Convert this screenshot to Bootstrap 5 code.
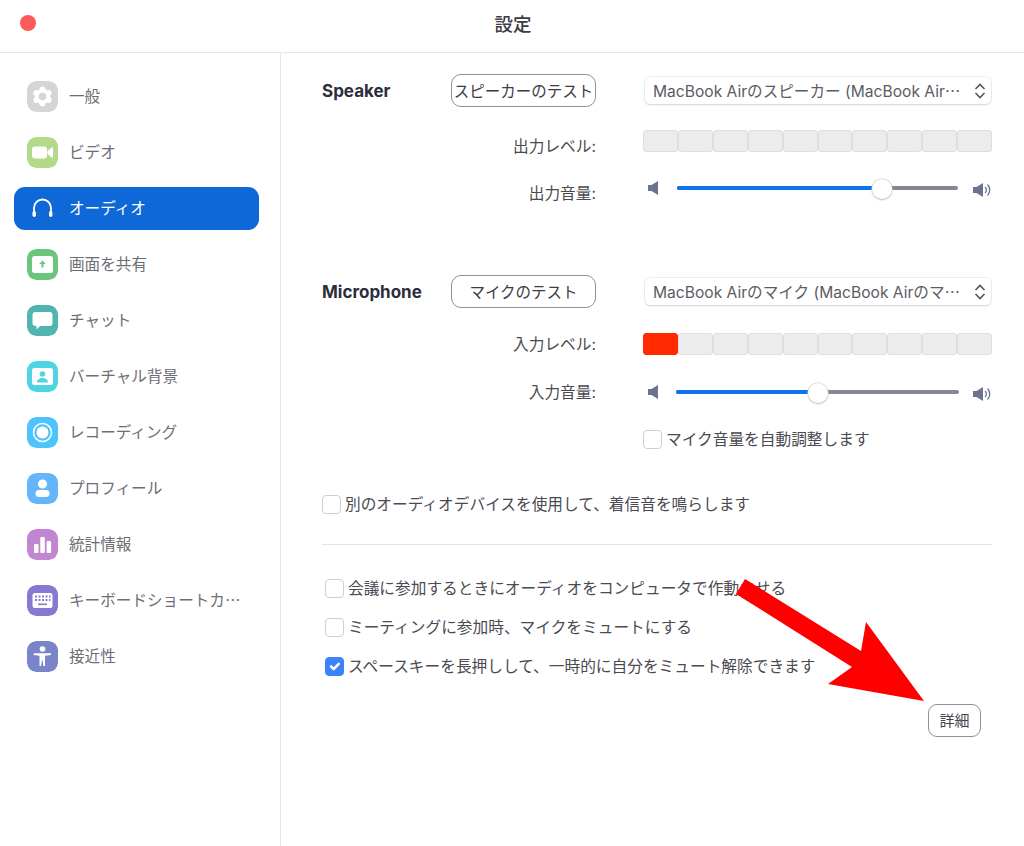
<!doctype html>
<html lang="ja">
<head>
<meta charset="utf-8">
<title>設定</title>
<link href="https://cdn.jsdelivr.net/npm/bootstrap@5.3.0/dist/css/bootstrap.min.css" rel="stylesheet">
<style>
html,body{margin:0;background:#fff}
body{font-family:Inter,"Noto Sans CJK JP",sans-serif;font-size:15.7px;color:#4f4f58}
.win{width:1024px;height:846px;overflow:hidden}
.topbar{height:53px;border-bottom:1px solid #e8e8e8}
.dot{width:16px;height:16px;border-radius:50%;background:#fc5b57;margin:-6px 0 0 20px}
.wintitle{font-size:18.500px;font-weight:500;color:#3c3c44;margin:-3px 0 0 2px}
.sidegap{flex:1 1 0}
.side{width:281px;height:793px;border-right:1px solid #e6e6e6;padding:22px 0 0 14px}
.sitem{width:245px;height:43px;padding-left:13px;gap:11px;border-radius:11px;color:#6d6d76;margin-bottom:13px;font-size:15.6px}
.sitem span{padding-top:1px}
.lab,.chk span,.hd,.seltxt{padding-top:2px}
.lab.low{padding-top:11px}
.sitem.on{background:#0e68d8;color:#fff}
.sico{width:31px;height:31px;border-radius:9px;flex:none;display:block}
.pane{width:743px;padding:21px 0 0 41px}
.srow{height:22px;width:670px}
.lab{width:274px;flex:none;text-align:right;color:#4a4a52}
.hd{width:129px;flex:none;font-weight:700;font-size:17px;color:#2d2d3c}
.ttbtn{width:145px;height:33px;border:1px solid #8f8f96;border-radius:10px;background:#fff;color:#3c3c44;font-size:15.5px;padding:2px 0 0;white-space:nowrap}
.sel{width:346px;margin-left:49px;height:27px;border-radius:5px;background:#fff;box-shadow:0 0 0 .5px #e0e0e0,0 1px 2px #d4d4d4;padding:0 5px 0 8px;color:#5c5c64;font-size:15.6px}
.seltxt{white-space:nowrap;overflow:hidden}
.meter{width:349px;margin-left:47px;height:22px}
.seg{flex:1 1 0;background:#ececec;border:1px solid #dedede;border-radius:3px}
.seg.hot{background:#ff2a00;border-color:#ff2a00}
.volwrap{width:349px;margin-left:47px;height:22px}
.trk{height:4px;border-radius:2px;background:#85859a;flex:1 1 0;position:relative;margin:0 14px 0 18px}
.trk.m{margin:0 13px 0 17px}
.trkfill{height:4px;border-radius:2px;background:#0e72ed}
.thumb{position:absolute;top:-7px;width:20px;height:20px;margin-left:-10px;border-radius:50%;background:#fff;box-shadow:0 0 0 .5px #ccc,0 1px 2px #bbb}
.chk{gap:4px;color:#4a4a52}
.chk .form-check-input{width:19px;height:19px;margin:0;border:1px solid #cfcfcf;border-radius:4px;flex:none;float:none}
.chk .form-check-input:checked{background-color:#3d83f7;border-color:#3d83f7}
.ind{margin-left:321px}
.ind3{margin-left:3px}
.rule{width:670px;height:1px;background:#e2e2e2}
.det{width:53px;height:33px;margin-left:606px;border:1px solid #8f8f96;border-radius:9px;background:#fff;font-size:15px;color:#44444c;padding:1px 0 0}
.volbig{margin-top:3px}
.mt23{margin-top:23px}.mt25{margin-top:25px}.mt26{margin-top:26px}.mt76{margin-top:76px}
.mt43{margin-top:43px}.mt29{margin-top:29px}.mt32{margin-top:32px}.mt17{margin-top:17px}.mt27{margin-top:27px}
.arrow{position:absolute;left:0;top:0;pointer-events:none}
</style>
</head>
<body>
<div class="win position-relative">
  <div class="topbar d-flex align-items-center">
    <div class="sidegap"><div class="dot"></div></div>
    <div class="wintitle">設定</div>
    <div class="sidegap"></div>
  </div>
  <div class="d-flex">
    <nav class="side">
      <div class="sitem d-flex align-items-center">
        <svg class="sico" viewBox="0 0 31 31"><rect width="31" height="31" rx="9" fill="#d5d5d5"/><g fill="#fff"><circle cx="15.500" cy="15.500" r="7.500"/><circle cx="15.500" cy="8.500" r="3"/><circle cx="15.500" cy="22.500" r="3"/><circle cx="9.400" cy="12" r="3"/><circle cx="21.600" cy="12" r="3"/><circle cx="9.400" cy="19" r="3"/><circle cx="21.600" cy="19" r="3"/></g><circle cx="15.500" cy="15.500" r="3.800" fill="#d5d5d5"/></svg>
        <span>一般</span>
      </div>
      <div class="sitem d-flex align-items-center">
        <svg class="sico" viewBox="0 0 31 31"><rect width="31" height="31" rx="9" fill="#b3d98a"/><rect x="5" y="9.500" width="15" height="12" rx="3" fill="#fff"/><path d="M21 14l4.500-3.500v10l-4.500-3.500z" fill="#fff" stroke="#fff" stroke-linejoin="round"/></svg>
        <span>ビデオ</span>
      </div>
      <div class="sitem on d-flex align-items-center">
        <svg class="sico" viewBox="0 0 31 31"><path d="M7 21v-6a8.500 8.500 0 0 1 17 0v6" fill="none" stroke="#fff" stroke-width="1.800"/><rect x="5.500" y="18" width="3.400" height="6" rx="1.700" fill="#fff"/><rect x="22" y="18" width="3.400" height="6" rx="1.700" fill="#fff"/></svg>
        <span>オーディオ</span>
      </div>
      <div class="sitem d-flex align-items-center">
        <svg class="sico" viewBox="0 0 31 31"><rect width="31" height="31" rx="9" fill="#6cc57d"/><rect x="5" y="7" width="21" height="17" rx="2.500" fill="#fff"/><path d="M15.500 11.500l3.300 3.500h-2.300v3.500h-2v-3.500h-2.300z" fill="#6cc57d"/></svg>
        <span>画面を共有</span>
      </div>
      <div class="sitem d-flex align-items-center">
        <svg class="sico" viewBox="0 0 31 31"><rect width="31" height="31" rx="9" fill="#4fb5ae"/><path d="M8.500 7h14a3 3 0 0 1 3 3v8a3 3 0 0 1-3 3h-9.500l-3.500 3.500v-3.500h-1a3 3 0 0 1-3-3v-8a3 3 0 0 1 3-3z" fill="#fff"/></svg>
        <span>チャット</span>
      </div>
      <div class="sitem d-flex align-items-center">
        <svg class="sico" viewBox="0 0 31 31"><rect width="31" height="31" rx="9" fill="#4fd4e4"/><rect x="5" y="7" width="21" height="17" rx="2.500" fill="#fff"/><circle cx="15.500" cy="13" r="2.800" fill="#4fd4e4"/><path d="M10 21.500c0-3 2.500-4.500 5.500-4.500s5.500 1.500 5.500 4.500z" fill="#4fd4e4"/></svg>
        <span>バーチャル背景</span>
      </div>
      <div class="sitem d-flex align-items-center">
        <svg class="sico" viewBox="0 0 31 31"><rect width="31" height="31" rx="9" fill="#4dc4fb"/><circle cx="15.500" cy="15.500" r="9" fill="none" stroke="#fff" stroke-width="1.500"/><circle cx="15.500" cy="15.500" r="6" fill="#fff"/></svg>
        <span>レコーディング</span>
      </div>
      <div class="sitem d-flex align-items-center">
        <svg class="sico" viewBox="0 0 31 31"><rect width="31" height="31" rx="9" fill="#64b5fa"/><circle cx="15.500" cy="11" r="4.500" fill="#fff"/><rect x="8.500" y="17" width="14" height="7" rx="3.500" fill="#fff"/></svg>
        <span>プロフィール</span>
      </div>
      <div class="sitem d-flex align-items-center">
        <svg class="sico" viewBox="0 0 31 31"><rect width="31" height="31" rx="9" fill="#c285d2"/><rect x="7" y="15" width="4.500" height="9" rx="1" fill="#fff"/><rect x="13.300" y="8" width="4.500" height="16" rx="1" fill="#fff"/><rect x="19.600" y="12" width="4.500" height="12" rx="1" fill="#fff"/></svg>
        <span>統計情報</span>
      </div>
      <div class="sitem d-flex align-items-center">
        <svg class="sico" viewBox="0 0 31 31"><rect width="31" height="31" rx="9" fill="#8878d2"/><rect x="5.500" y="8" width="20" height="15" rx="2.500" fill="#fff"/><g fill="#8878d2"><rect x="8" y="10.500" width="2" height="2"/><rect x="11.500" y="10.500" width="2" height="2"/><rect x="15" y="10.500" width="2" height="2"/><rect x="18.500" y="10.500" width="2" height="2"/><rect x="22" y="10.500" width="1.500" height="2"/><rect x="8" y="14" width="2" height="2"/><rect x="11.500" y="14" width="2" height="2"/><rect x="15" y="14" width="2" height="2"/><rect x="18.500" y="14" width="2" height="2"/><rect x="22" y="14" width="1.500" height="2"/><rect x="11" y="18.500" width="9" height="1.600"/></g></svg>
        <span>キーボードショートカ⋯</span>
      </div>
      <div class="sitem d-flex align-items-center">
        <svg class="sico" viewBox="0 0 31 31"><rect width="31" height="31" rx="9" fill="#7a85c9"/><circle cx="15.500" cy="8" r="2.800" fill="#fff"/><path d="M7 12.200h17v1.800l-6 .8v10.200h-1.700l-.8-6h-.600l-.8 6h-1.600v-10.200l-6-.8z" fill="#fff"/></svg>
        <span>接近性</span>
      </div>
    </nav>
    <main class="pane">
      <div class="d-flex align-items-center">
        <div class="hd">Speaker</div>
        <button class="ttbtn" type="button">スピーカーのテスト</button>
        <div class="sel d-flex align-items-center justify-content-between">
          <span class="seltxt">MacBook Airのスピーカー (MacBook Air⋯</span>
          <svg width="12" height="18" viewBox="0 0 12 18" class="flex-none"><path d="M1.500 7l4.500-4.500 4.500 4.500M1.500 11l4.500 4.500 4.500-4.500" fill="none" stroke="#55555c" stroke-width="1.600"/></svg>
        </div>
      </div>
      <div class="srow d-flex align-items-center mt23">
        <div class="lab low">出力レベル:</div>
        <div class="meter d-flex"><i class="seg"></i><i class="seg"></i><i class="seg"></i><i class="seg"></i><i class="seg"></i><i class="seg"></i><i class="seg"></i><i class="seg"></i><i class="seg"></i><i class="seg"></i></div>
      </div>
      <div class="srow d-flex align-items-center mt25">
        <div class="lab low">出力音量:</div>
        <div class="volwrap d-flex align-items-center">
          <svg class="ms-1" width="12" height="14" viewBox="0 0 12 14"><path d="M1 4h3.500L11 0v14l-6.500-4H1z" fill="#6b7390"/></svg>
          <div class="trk"><div class="trkfill" style="width:73%"></div><div class="thumb" style="left:73%"></div></div>
          <svg class="volbig" width="20" height="16" viewBox="0 0 20 16"><path d="M1 5h3.500L11 1v14l-6.500-4H1z" fill="#6b7390"/><path d="M13 5a4 4 0 0 1 0 6M15.500 2.500a8 8 0 0 1 0 11" fill="none" stroke="#6b7390" stroke-width="1.300"/></svg>
        </div>
      </div>
      <div class="d-flex align-items-center mt76">
        <div class="hd">Microphone</div>
        <button class="ttbtn" type="button">マイクのテスト</button>
        <div class="sel d-flex align-items-center justify-content-between">
          <span class="seltxt">MacBook Airのマイク (MacBook Airのマ⋯</span>
          <svg width="12" height="18" viewBox="0 0 12 18" class="flex-none"><path d="M1.500 7l4.500-4.500 4.500 4.500M1.500 11l4.500 4.500 4.500-4.500" fill="none" stroke="#55555c" stroke-width="1.600"/></svg>
        </div>
      </div>
      <div class="srow d-flex align-items-center mt25">
        <div class="lab">入力レベル:</div>
        <div class="meter d-flex"><i class="seg hot"></i><i class="seg"></i><i class="seg"></i><i class="seg"></i><i class="seg"></i><i class="seg"></i><i class="seg"></i><i class="seg"></i><i class="seg"></i><i class="seg"></i></div>
      </div>
      <div class="srow d-flex align-items-center mt26">
        <div class="lab">入力音量:</div>
        <div class="volwrap d-flex align-items-center">
          <svg class="ms-1" width="12" height="14" viewBox="0 0 12 14"><path d="M1 4h3.500L11 0v14l-6.500-4H1z" fill="#6b7390"/></svg>
          <div class="trk m"><div class="trkfill" style="width:50%"></div><div class="thumb" style="left:50%"></div></div>
          <svg class="volbig" width="20" height="16" viewBox="0 0 20 16"><path d="M1 5h3.500L11 1v14l-6.500-4H1z" fill="#6b7390"/><path d="M13 5a4 4 0 0 1 0 6M15.500 2.500a8 8 0 0 1 0 11" fill="none" stroke="#6b7390" stroke-width="1.300"/></svg>
        </div>
      </div>
      <label class="srow chk d-flex align-items-center mt25 ind">
        <input class="form-check-input" type="checkbox"><span>マイク音量を自動調整します</span>
      </label>
      <label class="srow chk d-flex align-items-center mt43">
        <input class="form-check-input" type="checkbox"><span>別のオーディオデバイスを使用して、着信音を鳴らします</span>
      </label>
      <div class="rule mt29"></div>
      <label class="srow chk d-flex align-items-center mt32 ind3">
        <input class="form-check-input" type="checkbox"><span>会議に参加するときにオーディオをコンピュータで作動させる</span>
      </label>
      <label class="srow chk d-flex align-items-center mt17 ind3">
        <input class="form-check-input" type="checkbox"><span>ミーティングに参加時、マイクをミュートにする</span>
      </label>
      <label class="srow chk d-flex align-items-center mt17 ind3">
        <input class="form-check-input" type="checkbox" checked><span>スペースキーを長押しして、一時的に自分をミュート解除できます</span>
      </label>
      <button class="det d-block mt27" type="button">詳細</button>
    </main>
  </div>
  <svg class="arrow" width="1024" height="846" viewBox="0 0 1024 846"><polygon points="745,579 736,594 852,667 828,684 924,701 866,622 861,651" fill="#ff0000"/></svg>
</div>
<script src="https://cdn.jsdelivr.net/npm/bootstrap@5.3.0/dist/js/bootstrap.bundle.min.js"></script>
</body>
</html>
